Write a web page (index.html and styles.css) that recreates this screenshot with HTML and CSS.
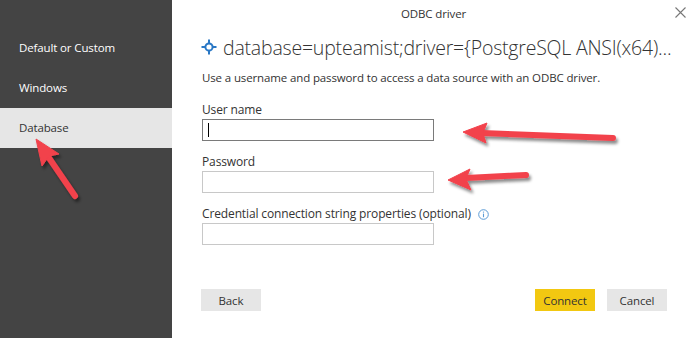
FILE: index.html
```html
<!DOCTYPE html>
<html lang="en">
<head>
  <meta charset="UTF-8" />
  <title>ODBC driver</title>
  <link rel="stylesheet" href="styles.css">
</head>
<body>
  <div class="dialog">
    <!-- Auth method list -->
    <aside class="sidebar">
      <div class="side-item">Default or Custom</div>
      <div class="side-item">Windows</div>
      <div class="side-item active">Database</div>
    </aside>

    <main class="content">
      <header class="titlebar">
        <span></span>
        <span class="title">ODBC driver</span>
        <span class="close">
          <svg width="11" height="11" viewBox="0 0 11 11"><path d="M0.5 0.5L10.5 10.5M10.5 0.5L0.5 10.5" stroke="#777" stroke-width="1.1" fill="none"/></svg>
        </span>
      </header>

      <div class="form">
        <h2 class="source">
          <svg class="source-icon" width="16" height="16" viewBox="0 0 16 16">
            <circle cx="8" cy="8" r="3.6" fill="none" stroke="#2a78c5" stroke-width="2"/>
            <path d="M8 0.5V4.4M8 11.6V15.5M0.5 8H4.4M11.6 8H15.5" stroke="#2a78c5" stroke-width="2"/>
          </svg>
          database=upteamist;driver={PostgreSQL ANSI(x64)...
        </h2>
        <p class="desc">Use a username and password to access a data source with an ODBC driver.</p>

        <label class="field">
          <span class="label">User name</span>
          <span class="input focused"><span class="caret"></span></span>
        </label>
        <label class="field">
          <span class="label">Password</span>
          <span class="input"></span>
        </label>
        <label class="field">
          <span class="label">Credential connection string properties (optional)
            <svg class="info" width="11" height="11" viewBox="0 0 11 11">
              <circle cx="5.5" cy="5.5" r="4.8" fill="none" stroke="#5b9bd5" stroke-width="1"/>
              <path d="M5.5 4.6V8.2" stroke="#5b9bd5" stroke-width="1.1"/>
              <circle cx="5.5" cy="3.1" r="0.7" fill="#5b9bd5"/>
            </svg>
          </span>
          <span class="input"></span>
        </label>

        <div class="actions">
          <button class="btn">Back</button>
          <span class="spacer"></span>
          <button class="btn primary">Connect</button>
          <button class="btn">Cancel</button>
        </div>
      </div>
    </main>

    <!-- annotation arrows drawn over the screenshot -->
    <svg class="arrows" width="695" height="338" viewBox="0 0 695 338">
      <defs>
        <filter id="shadow" x="-20%" y="-50%" width="140%" height="200%">
          <feDropShadow dx="2" dy="3" stdDeviation="1.6" flood-color="#000" flood-opacity="0.45"/>
        </filter>
      </defs>
      <g filter="url(#shadow)" fill="#f2424c" stroke="#f2424c">
        <line x1="613" y1="138" x2="482" y2="133" stroke-width="6" stroke-linecap="round"/>
        <path d="M463 132L487 123L483 133L486 143Z" stroke-width="1" stroke-linejoin="round"/>

        <line x1="526" y1="175" x2="466" y2="178" stroke-width="6" stroke-linecap="round"/>
        <path d="M448 180L470 169L466 179L471 190Z" stroke-width="1" stroke-linejoin="round"/>

        <line x1="75" y1="196" x2="47" y2="155" stroke-width="6" stroke-linecap="round"/>
        <path d="M36 139L59 154L49 156L42 166Z" stroke-width="1" stroke-linejoin="round"/>
      </g>
    </svg>
  </div>
</body>
</html>
```

FILE: styles.css
```css
body {
  margin: 0;
  font-family: 'Open Sans', sans-serif;
  font-size: 11.5px;
  letter-spacing: -0.13px;
  color: #333;
  background: #fff;
}

.dialog {
  position: relative;
  display: flex;
  width: 695px;
  height: 338px;
  overflow: hidden;
}

.sidebar {
  width: 172px;
  flex-shrink: 0;
  background: #444;
  padding-top: 28px;
}

.side-item {
  height: 40px;
  line-height: 40px;
  padding-left: 19px;
  font-size: 11.5px;
  color: #fff;
}

.side-item.active {
  background: #e6e6e6;
  color: #333;
}

.content {
  flex: 1;
  min-width: 0;
}

.titlebar {
  display: grid;
  grid-template-columns: 1fr auto 1fr;
  align-items: center;
  height: 26px;
}

.title {
  font-size: 11.5px;
}

.close {
  justify-self: end;
  margin-right: 9px;
  height: 11px;
  margin-top: -2px;
}

.close svg {
  display: block;
}

.form {
  padding: 0 28px 0 30px;
}

.source {
  display: flex;
  align-items: center;
  gap: 6px;
  margin: 8px 0 0;
  height: 26px;
  font-size: 19.5px;
  font-weight: 300;
  letter-spacing: -0.2px;
  color: #333;
  white-space: nowrap;
}

.source-icon {
  margin-left: -1px;
  flex-shrink: 0;
}

.desc {
  margin: 10px 0 0;
  height: 16px;
  line-height: 16px;
}

.field {
  display: block;
  margin-top: 13px;
}

.field:first-of-type {
  margin-top: 16px;
}

.label {
  display: flex;
  align-items: center;
  gap: 7px;
  height: 16px;
  line-height: 16px;
  font-size: 12px;
}

.input {
  display: block;
  box-sizing: border-box;
  width: 232px;
  height: 22px;
  margin-top: 1px;
  border: 1px solid #c8c8c8;
  padding: 3px 5px;
}

.input.focused {
  border-color: #7a7a7a;
}

.caret {
  display: block;
  width: 1px;
  height: 14px;
  background: #000;
}

.actions {
  display: flex;
  gap: 12px;
  margin-top: 44px;
}

.spacer {
  flex: 1;
}

.btn {
  width: 60px;
  height: 22px;
  padding: 0;
  border: none;
  background: #e6e6e6;
  font-family: inherit;
  font-size: 11.5px;
  letter-spacing: -0.13px;
  color: #333;
}

.btn:first-child {
  margin-left: -1px;
}

.btn.primary {
  background: #f2c811;
}

.arrows {
  position: absolute;
  left: 0;
  top: 0;
  pointer-events: none;
}
```
